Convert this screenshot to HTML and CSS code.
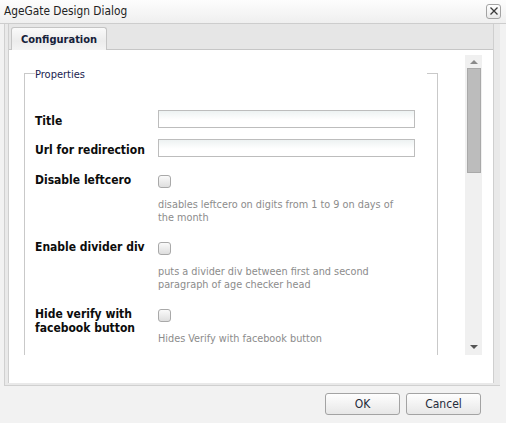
FILE: index.html
```html
<!DOCTYPE html>
<html>
<head>
<meta charset="utf-8">
<link rel="stylesheet" href="styles.css">
</head>
<body>
<div class="dialog">
  <div class="titlebar">
    <span class="title">AgeGate Design Dialog</span>
    <span class="close"><svg width="12" height="12" viewBox="0 0 12 12"><path d="M2.5 2.5 L9.5 9.5 M9.5 2.5 L2.5 9.5" stroke="#3a3a3a" stroke-width="1.3" fill="none"/></svg></span>
  </div>
  <div class="frame">
    <div class="tabpanel">
      <div class="tabstrip">
        <div class="tab">Configuration</div>
      </div>
      <div class="panel">
        <div class="scrollarea">
          <div class="content">
            <div class="fieldset">
              <div class="legend-row">
                <span class="corner-left"></span>
                <span class="legend">Properties</span>
                <span class="corner-right"></span>
              </div>
              <div class="form">
                <div class="row text-row">
                  <label class="label">Title</label>
                  <div class="field"><div class="input"></div></div>
                </div>
                <div class="row text-row">
                  <label class="label">Url for redirection</label>
                  <div class="field"><div class="input"></div></div>
                </div>
                <div class="row check-row">
                  <label class="label">Disable leftcero</label>
                  <div class="field">
                    <div class="checkbox"></div>
                    <div class="desc">disables leftcero on digits from 1 to 9 on days of the month</div>
                  </div>
                </div>
                <div class="row check-row">
                  <label class="label">Enable divider div</label>
                  <div class="field">
                    <div class="checkbox"></div>
                    <div class="desc">puts a divider div between first and second paragraph of age checker head</div>
                  </div>
                </div>
                <div class="row check-row">
                  <label class="label">Hide verify with facebook button</label>
                  <div class="field">
                    <div class="checkbox"></div>
                    <div class="desc">Hides Verify with facebook button</div>
                  </div>
                </div>
              </div>
            </div>
          </div>
          <div class="scrollbar">
            <span class="arrow-up"></span>
            <span class="thumb"></span>
            <span class="spacer"></span>
            <span class="arrow-down"></span>
          </div>
        </div>
      </div>
    </div>
  </div>
  <div class="footer">
    <button class="btn">OK</button>
    <button class="btn">Cancel</button>
  </div>
</div>
</body>
</html>
```
FILE: styles.css
```css
* { box-sizing: border-box; }
html, body { margin: 0; padding: 0; }
body {
  width: 506px;
  height: 423px;
  overflow: hidden;
  font-family: "DejaVu Sans Condensed", "DejaVu Sans", sans-serif;
  background: #f2f2f2;
}
.dialog {
  width: 506px;
  height: 423px;
  display: flex;
  flex-direction: column;
  background: #f2f2f2;
}
.titlebar {
  height: 24px;
  flex: none;
  display: flex;
  align-items: center;
  justify-content: space-between;
  padding: 0 5px 0 4px;
  background: linear-gradient(#fdfdfd, #efefef);
  border-bottom: 1px solid #cdcdcd;
}
.title {
  font-size: 11.8px;
  color: #222;
  margin-top: -1px;
}
.close {
  width: 15px;
  height: 15px;
  border: 1px solid #a3a3a3;
  border-radius: 3px;
  background: linear-gradient(#ffffff, #e9e9e9);
  display: flex;
  align-items: center;
  justify-content: center;
  margin-top: -1px;
}
.frame {
  height: 362px;
  flex: none;
  margin-left: 4px;
  width: 496px;
  border-left: 1px solid #d0d0d0;
  border-bottom: 1px solid #d0d0d0;
  background: #e9e9e9;
  padding: 0 6px 2px 3px;
  display: flex;
}
.tabpanel {
  flex: 1;
  display: flex;
  flex-direction: column;
  border-left: 1px solid #cfcfcf;
  border-right: 1px solid #cfcfcf;
  border-bottom: 1px solid #cfcfcf;
}
.tabstrip {
  height: 26px;
  flex: none;
  background: #e6e6e6;
  border-bottom: 1px solid #c6c6c6;
  padding: 3px 0 0 2px;
  display: flex;
  align-items: flex-end;
}
.tab {
  height: 23px;
  margin-bottom: -1px;
  width: 96px;
  border: 1px solid #c4c4c4;
  border-bottom: none;
  border-radius: 3px 3px 0 0;
  background: linear-gradient(#fafafa, #ececec 60%, #f4f4f4);
  font-size: 11px;
  font-weight: bold;
  color: #15213a;
  padding: 5px 0 0 9px;
}
.panel {
  flex: 1;
  background: #fff;
  padding: 5px 11px 28px 7px;
  display: flex;
}
.scrollarea {
  flex: 1;
  height: 300px;
  display: flex;
  overflow: hidden;
}
.content {
  flex: 1;
  padding: 18px 27px 0 8px;
}
.fieldset {
  border-left: 1px solid #c9c9c9;
  border-right: 1px solid #c9c9c9;
  height: 400px;
}
.legend-row {
  display: flex;
  align-items: flex-start;
  height: 14px;
}
.corner-left {
  width: 10px;
  border-top: 1px solid #c9c9c9;
}
.corner-right {
  margin-left: auto;
  width: 10px;
  border-top: 1px solid #c9c9c9;
}
.legend {
  font-size: 11px;
  color: #1a2350;
  margin-top: -5px;
}
.form {
  padding: 23px 0 0 10px;
}
.row {
  display: grid;
  grid-template-columns: 123px 257px;
}
.label {
  font-size: 12px;
  font-weight: bold;
  color: #0c0c0c;
  line-height: 14px;
}
.text-row {
  height: 29px;
}
.text-row .label {
  padding-top: 4px;
}
.input {
  height: 18px;
  border: 1px solid #bdbdbd;
  background: linear-gradient(#edf2f2, #ffffff 9px);
}
.check-row {
  height: 67px;
}
.check-row .label {
  padding-top: 5px;
}
.checkbox {
  width: 13px;
  height: 13px;
  border: 1px solid #a9a9a9;
  border-radius: 3px;
  background: linear-gradient(#fafafa, #dedede);
  margin-top: 7px;
}
.desc {
  font-size: 10.8px;
  line-height: 13px;
  color: #8c8c8c;
  margin-top: 10px;
  width: 245px;
}
.scrollbar {
  width: 17px;
  flex: none;
  background: #f0f0f0;
  display: flex;
  flex-direction: column;
  align-items: center;
}
.arrow-up {
  margin-top: 5px;
  width: 0;
  height: 0;
  border-left: 4px solid transparent;
  border-right: 4px solid transparent;
  border-bottom: 4px solid #8a8a8a;
}
.thumb {
  margin-top: 4px;
  width: 14px;
  height: 105px;
  background: #bcbcbc;
  border: 1px solid #a9a9a9;
}
.spacer { flex: 1; }
.arrow-down {
  margin-bottom: 6px;
  width: 0;
  height: 0;
  border-left: 4px solid transparent;
  border-right: 4px solid transparent;
  border-top: 4px solid #555;
}
.footer {
  flex: 1;
  display: flex;
  justify-content: flex-end;
  gap: 6px;
  padding: 7px 25px 0 0;
}
.btn {
  width: 75px;
  height: 22px;
  border: 1px solid #a3a3a3;
  border-radius: 3px;
  background: linear-gradient(#fefefe, #e7e7e7);
  font-family: "DejaVu Sans Condensed", "DejaVu Sans", sans-serif;
  font-size: 12px;
  color: #1f2b3a;
  padding: 0;
}
```
